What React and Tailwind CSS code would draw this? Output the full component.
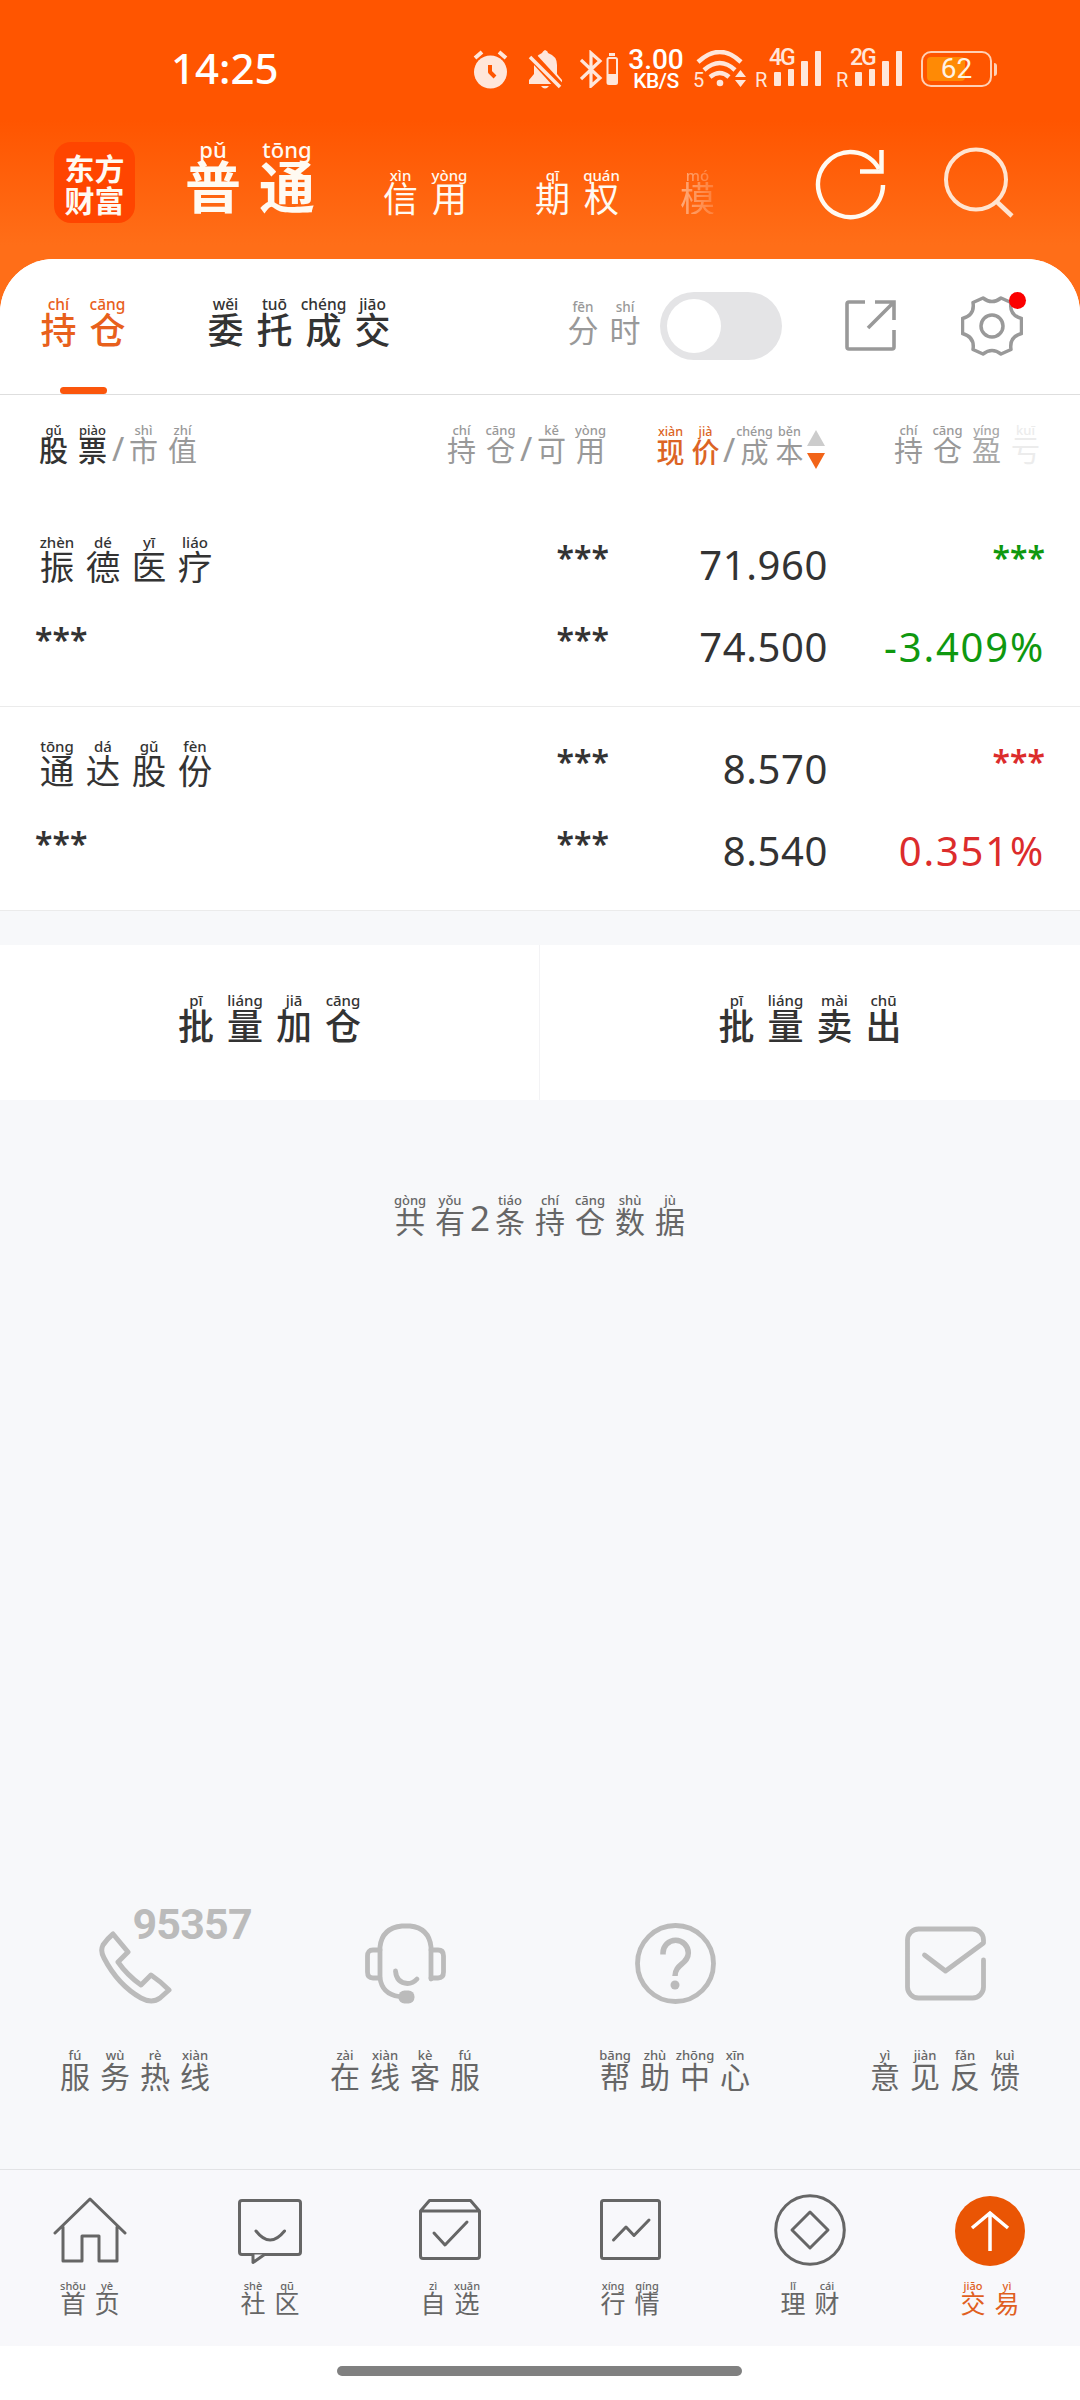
import React from "react";

const SIZES = {
  title: { cell: "w-[74px]", py: "text-[22px] leading-[13px]", hz: "text-[56px]" },
  nav: { cell: "w-[49px]", py: "text-[15px] leading-[10px]", hz: "-mt-[1px] text-[35px]" },
  tab: { cell: "w-[49px]", py: "text-[15.5px] leading-[12px]", hz: "text-[36px]" },
  toggle: { cell: "w-[42px]", py: "text-[13.5px] leading-[11px]", hz: "text-[31px]" },
  head: { cell: "w-[39px]", py: "text-[13px] leading-[10px]", hz: "text-[29px]" },
  price: { cell: "w-[35px]", py: "text-[12.5px] leading-[10px]", hz: "text-[28px]" },
  stock: { cell: "w-[46px]", py: "text-[15px] leading-[11px]", hz: "text-[34.5px]" },
  button: { cell: "w-[49px]", py: "text-[15px] leading-[11px]", hz: "text-[36px]" },
  note: { cell: "w-[40px]", py: "text-[13px] leading-[10px]", hz: "text-[30px]" },
  footer: { cell: "w-[34px]", py: "text-[11px] leading-[9px]", hz: "text-[25px]" },
};

// Texto chino con el pinyin encima de cada carácter
function Pinyin({ text, py, size, className = "" }) {
  const s = SIZES[size];
  const silabas = py.split(" ");
  return (
    <div className={`flex shrink-0 ${className}`}>
      {[...text].map((c, i) => (
        <div key={i} className={`flex flex-col items-center ${s.cell}`}>
          <span className={`whitespace-nowrap font-medium ${s.py}`}>{silabas[i]}</span>
          <span className={`font-['Noto_Sans_CJK_SC',sans-serif] leading-none ${s.hz}`}>{c}</span>
        </div>
      ))}
    </div>
  );
}

function Svg({ w, h, sw = 3, className = "", children }) {
  return (
    <svg
      width={w}
      height={h}
      viewBox={`0 0 ${w} ${h}`}
      fill="none"
      stroke="currentColor"
      strokeWidth={sw}
      strokeLinejoin="round"
      strokeLinecap="round"
      className={`shrink-0 ${className}`}
    >
      {children}
    </svg>
  );
}

function Senal({ tipo }) {
  return (
    <div className="flex h-[38px] w-[66px] text-[#ffe6da]">
      <span className="mt-[20px] w-[14px] font-['Roboto',sans-serif] text-[20px] leading-none">R</span>
      <div className="relative flex h-[36px] items-end gap-[7px] pl-[5px]">
        <span className="absolute left-0 -top-[4px] font-['Roboto',sans-serif] text-[23px] font-medium leading-none tracking-[-2px]">
          {tipo}
        </span>
        <div className="h-[14px] w-[6.5px] rounded-[1px] bg-current"></div>
        <div className="h-[17px] w-[6.5px] rounded-[1px] bg-current"></div>
        <div className="h-[25px] w-[6.5px] rounded-[1px] bg-current"></div>
        <div className="h-[35px] w-[6.5px] rounded-[1px] bg-current"></div>
      </div>
    </div>
  );
}

function BarraEstado() {
  return (
    <div className="flex h-[130px] items-start pl-[171px] text-white">
      <span className="mt-[47px] w-[302px] text-[42px] font-medium leading-none">14:25</span>
      <div className="flex items-start pt-[50px] text-[#ffe6da]">
        {/* Alarma */}
        <Svg w={35} h={39} sw={4}>
          <circle cx="17.5" cy="22" r="16.5" fill="currentColor" stroke="none" />
          <path d="M2 8 9 2M33 8 26 2" strokeLinecap="butt" />
          <path d="M17 15V22L22 27" stroke="#ff5500" strokeLinecap="butt" />
        </Svg>
        {/* Campana silenciada */}
        <Svg w={35} h={39} sw={3.5} className="ml-[20px]">
          <path
            d="M17 0Q20 1 20 3Q29 6 29 15V24L34 30V34H1V30L6 24V15Q6 6 14 3Q15 1 17 0ZM13 36H21Q17 41 13 36Z"
            fill="currentColor"
            stroke="none"
          />
          <path d="M1 3 33 38" stroke="#ff5500" strokeWidth="9" strokeLinecap="butt" />
          <path d="M2 7 32 37" strokeLinecap="butt" />
        </Svg>
        {/* Bluetooth */}
        <Svg w={38} h={38} sw={3.2} className="ml-[17px]">
          <path d="M1 10 20 28 11 36V3L20 11 1 29" strokeLinejoin="miter" strokeLinecap="butt" />
          <rect x="27.500" y="8" width="9.500" height="26" rx="1.500" strokeWidth="2" />
          <path d="M29 4.500H35" strokeWidth="3" strokeLinecap="butt" />
          <rect x="27" y="24" width="10" height="10" fill="currentColor" stroke="none" />
        </Svg>
        <div className="-mt-[2px] ml-[9px] flex w-[58px] flex-col items-center font-['Roboto',sans-serif] font-medium text-white">
          <span className="text-[28px] leading-[24px]">3.00</span>
          <span className="text-[21px] leading-[18px] tracking-[-0.5px]">KB/S</span>
        </div>
        {/* Wifi */}
        <Svg w={52} h={40} sw={4.5} className="ml-[9px]">
          <path d="M4 12Q26 -8 47 12M10 20Q26 6 41 20M16 27Q26 19 35 27" strokeLinecap="butt" />
          <circle cx="26" cy="33" r="3.300" fill="currentColor" stroke="none" />
          <path d="M41 27 46.500 20 52 27ZM41 30 46.500 37 52 30Z" fill="currentColor" stroke="none" />
          <text x="-1" y="37" className="font-['Roboto',sans-serif] text-[20px]" fill="currentColor" stroke="none">
            5
          </text>
        </Svg>
        <div className="ml-[9px] flex gap-[15px]">
          <Senal tipo="4G" />
          <Senal tipo="2G" />
        </div>
        {/* Batería */}
        <div className="ml-[19px] mt-[1px] flex items-center gap-[2px]">
          <div className="relative flex h-[36px] w-[71px] items-center justify-center rounded-[10px] border-[2.5px] border-[#ffd0b5]">
            <div className="absolute left-[4px] top-[4px] h-[24px] w-[38px] rounded-[4px] bg-[#ff8a05]"></div>
            <span className="relative font-['Roboto',sans-serif] text-[28px] leading-none text-[#fff3e4]">62</span>
          </div>
          <div className="h-[13px] w-[3px] rounded-r bg-[#ffd0b5]"></div>
        </div>
      </div>
    </div>
  );
}

function Cabecera() {
  return (
    <div className="flex h-[129px] items-start text-[#fffaf2]">
      {/* Logo */}
      <div className="ml-[54px] mt-[12px] flex h-[81px] w-[81px] flex-col items-center justify-center rounded-[17px] bg-[#ff4500] font-['Noto_Sans_CJK_SC',sans-serif] text-[30px] font-bold leading-[32px]">
        <span>东方</span>
        <span>财富</span>
      </div>
      <Pinyin text="普通" py="pǔ tōng" size="title" className="ml-[41px] mt-[13px] font-bold" />
      <Pinyin text="信用" py="xìn yòng" size="nav" className="ml-[52px] mt-[40px]" />
      <Pinyin text="期权" py="qī quán" size="nav" className="ml-[54px] mt-[40px]" />
      {/* Se desvanece hacia el borde derecho */}
      <div className="ml-[52px] mt-[36px] w-[37px] overflow-hidden pl-[2px] pt-[4px] text-[#ffae80] [mask-image:linear-gradient(to_right,black,rgba(0,0,0,0.35))]">
        <Pinyin text="模" py="mó" size="nav" />
      </div>
      <Svg w={71} h={72} sw={4.5} className="ml-[100px] mt-[18px]">
        <path d="M68 37A32.500 32.500 0 1 1 64 21" strokeLinecap="butt" />
        <path d="M66.500 2V23.500H45" strokeLinejoin="miter" strokeLinecap="butt" />
      </Svg>
      <Svg w={71} h={72} sw={4} className="ml-[58px] mt-[17px] text-[#ffe4d0]">
        <circle cx="32" cy="32.500" r="30" />
        <path d="M52 54 68 69" strokeLinecap="butt" strokeWidth="4.500" />
      </Svg>
    </div>
  );
}

function Pestanas() {
  return (
    <div className="flex h-[136px] items-start border-b border-[#dedede] bg-white pl-[34px] text-[#333]">
      <div className="flex flex-col items-center font-medium text-[#e8601c]">
        <Pinyin text="持仓" py="chí cāng" size="tab" className="mt-[39px]" />
        <div className="mt-[41px] h-[7px] w-[47px] rounded-full bg-[#fb560c]"></div>
      </div>
      <Pinyin text="委托成交" py="wěi tuō chéng jiāo" size="tab" className="ml-[69px] mt-[39px] font-medium" />
      <Pinyin text="分时" py="fēn shí" size="toggle" className="ml-[165px] mt-[43px] text-[#999]" />
      <div className="ml-[14px] mt-[33px] h-[68px] w-[122px] rounded-full bg-[#e4e4e6] p-[7px]">
        <div className="h-[54px] w-[54px] rounded-full bg-white"></div>
      </div>
      <Svg w={51} h={51} sw={3.6} className="ml-[63px] mt-[41px] text-[#999]">
        <path d="M20 2H4Q2 2 2 4V47Q2 49 4 49H47Q49 49 49 47V30" strokeLinecap="butt" />
        <path d="M30 2H49V20M49 2 23 28" strokeLinecap="butt" strokeLinejoin="miter" />
      </Svg>
      <div className="relative ml-[65px] mt-[36px]">
        <Svg w={62} h={62} sw={3.5} className="text-[#999]">
          <g transform="translate(31 31)">
            <path d="M-9-28Q0-21 9-28L19-23.500Q17-11 29.500-7.500V7.500Q17 11 19 23.500L9 28Q0 21-9 28L-19 23.500Q-17 11-29.500 7.500V-7.500Q-17-11-19-23.500Z" />
            <circle r="11" />
          </g>
        </Svg>
        <div className="absolute -top-[3px] right-[-3px] h-[17px] w-[17px] rounded-full bg-[#fb0000]"></div>
      </div>
    </div>
  );
}

function Barra() {
  return (
    <span className="w-[12px] text-center font-['Noto_Sans',sans-serif] text-[33px] leading-[31px]">/</span>
  );
}

function EncabezadoTabla() {
  return (
    <div className="flex h-[108px] items-start bg-white pl-[34px] pt-[30px] text-[#999]">
      <div className="flex items-end">
        <Pinyin text="股票" py="gǔ piào" size="head" className="font-medium text-[#333]" />
        <Barra />
        <Pinyin text="市值" py="shì zhí" size="head" />
      </div>
      <div className="ml-[240px] flex items-end">
        <Pinyin text="持仓" py="chí cāng" size="head" />
        <Barra />
        <Pinyin text="可用" py="kě yòng" size="head" />
      </div>
      <div className="ml-[43px] mt-[2px] flex items-end">
        <Pinyin text="现价" py="xiàn jià" size="price" className="font-medium text-[#dc6424]" />
        <Barra />
        <Pinyin text="成本" py="chéng běn" size="price" className="ml-[2px]" />
      </div>
      <Svg w={18} h={40} className="mt-[5px]">
        <path d="M0 16 9 0 18 16Z" fill="#ccc" stroke="none" />
        <path d="M0 23 9 39 18 23Z" fill="#f26418" stroke="none" />
      </Svg>
      <div className="ml-[64px] flex">
        <Pinyin text="持仓" py="chí cāng" size="head" />
        <Pinyin text="盈" py="yíng" size="head" className="text-[#a8a8a8]" />
        <Pinyin text="亏" py="kuī" size="head" className="text-[#ececec]" />
      </div>
    </div>
  );
}

const acciones = [
  { nombre: "振德医疗", py: "zhèn dé yī liáo", actual: "71.960", coste: "74.500", pct: "-3.409%", color: "text-[#0f980f]" },
  { nombre: "通达股份", py: "tōng dá gǔ fèn", actual: "8.570", coste: "8.540", pct: "0.351%", color: "text-[#dc2c2c]" },
];

function Oculto({ className = "" }) {
  return <span className={`text-[32px] font-semibold leading-none ${className}`}>***</span>;
}

function FilaAccion({ accion }) {
  return (
    <div className="grid h-[204px] grid-cols-[575px_219px_217px] grid-rows-[82px_82px] border-b border-[#ebebeb] bg-white pl-[34px] pt-[39px] text-[#333]">
      <div className="flex justify-between">
        <Pinyin text={accion.nombre} py={accion.py} size="stock" className="-mt-[5px]" />
        <Oculto />
      </div>
      <span className="pt-[3px] text-right text-[40px] leading-none tracking-[0.6px]">{accion.actual}</span>
      <Oculto className={`text-right ${accion.color}`} />
      <div className="flex justify-between">
        <Oculto className="pl-[1px]" />
        <Oculto />
      </div>
      <span className="pt-[3px] text-right text-[40px] leading-none tracking-[0.6px]">{accion.coste}</span>
      <span className={`pt-[3px] text-right text-[40px] leading-none tracking-[1.8px] ${accion.color}`}>
        {accion.pct}
      </span>
    </div>
  );
}

const servicios = [
  {
    nombre: "服务热线",
    py: "fú wù rè xiàn",
    icono: (
      <div className="relative">
        <Svg w={73} h={81} sw={5}>
          <path d="M14 11 29 29 19 39Q28 52 42 62L52 52Q61 58 70 67L61 75Q53 81 42 75Q19 62 5 35Q1 28 4 22Q8 16 14 11Z" />
        </Svg>
        <span className="absolute -top-[20px] left-[34px] font-['Roboto',sans-serif] text-[43px] font-bold leading-none tracking-[-0.8px]">
          95357
        </span>
      </div>
    ),
  },
  {
    nombre: "在线客服",
    py: "zài xiàn kè fú",
    icono: (
      <Svg w={81} h={81} sw={4.8}>
        <path d="M66 56V24Q64 5 45 3H37Q17 5 15 24V55Q17 71 34 73.500" />
        <path d="M15 27H8Q2.500 27 2.500 33V49Q2.500 55 8 55H15M66 27H73Q78.500 27 78.500 33V49Q78.500 55 73 55H66" />
        <path d="M30.500 48Q31.500 60 42.500 60.500Q48 60.500 52 56" />
        <rect x="33.500" y="67.500" width="16" height="13" rx="6" fill="currentColor" stroke="none" />
      </Svg>
    ),
  },
  {
    nombre: "帮助中心",
    py: "bāng zhù zhōng xīn",
    icono: (
      <Svg w={81} h={81} sw={4.8}>
        <circle cx="40.500" cy="40.500" r="38" />
        <path d="M28 31.500V30A12.600 12.600 0 0 1 53.300 30C53.300 41 40 41 40 53" strokeLinecap="butt" strokeWidth="5.500" />
        <circle cx="40" cy="62" r="4.500" fill="currentColor" stroke="none" />
      </Svg>
    ),
  },
  {
    nombre: "意见反馈",
    py: "yì jiàn fǎn kuì",
    icono: (
      <Svg w={81} h={81} sw={4.8}>
        <path d="M78.500 37V64A11 11 0 0 1 67.500 75H13.500A11 11 0 0 1 2.500 64V17A11 11 0 0 1 13.500 6H67.500A11 11 0 0 1 78.500 17V20L40.500 48 19.500 32" />
      </Svg>
    ),
  },
];

const menu = [
  {
    nombre: "首页",
    py: "shǒu yè",
    icono: (
      <Svg w={74} h={72}>
        <path d="M2 39 37 5 72 39M10 33V67H29V42H46V67H64V33" />
      </Svg>
    ),
  },
  {
    nombre: "社区",
    py: "shè qū",
    icono: (
      <Svg w={64} h={72}>
        <rect x="1.500" y="6.500" width="61" height="54" rx="2.500" />
        <path d="M26.500 60.500 15 68.500V60.500" fill="#f8f8fb" />
        <path d="M18 37Q32 55 46.500 37" />
      </Svg>
    ),
  },
  {
    nombre: "自选",
    py: "zì xuǎn",
    icono: (
      <Svg w={62} h={72}>
        <path d="M1.500 17 10.500 6.500H51.500L60.500 17V62Q60.500 64.500 58 64.500H4Q1.500 64.500 1.500 62ZM2 17H60M15 39 26 51 48 28" />
      </Svg>
    ),
  },
  {
    nombre: "行情",
    py: "xíng qíng",
    icono: (
      <Svg w={61} h={72}>
        <rect x="1.500" y="6.500" width="58" height="58" rx="2" />
        <path d="M13.500 46 26 33 34 41.500 49 26" />
      </Svg>
    ),
  },
  {
    nombre: "理财",
    py: "lǐ cái",
    icono: (
      <Svg w={72} h={72}>
        <circle cx="36" cy="36" r="34.300" />
        <path d="M36 18 54 36 36 54 18 36Z" />
      </Svg>
    ),
  },
  {
    nombre: "交易",
    py: "jiāo yì",
    activo: true,
    icono: (
      <Svg w={72} h={72} sw={3.5} className="text-white">
        <circle cx="36" cy="37" r="35" fill="#ea5504" stroke="none" />
        <path d="M36 18V57M18 34 36 19 54 34" strokeLinecap="butt" strokeLinejoin="miter" />
      </Svg>
    ),
  },
];

export default function App() {
  return (
    <div className="flex h-[2400px] w-[1080px] flex-col overflow-hidden bg-[#f7f8fa] font-['Noto_Sans','Noto_Sans_CJK_SC',sans-serif]">
      <div className="h-[313px] bg-[linear-gradient(#ff5500_0px,#ff5500_120px,#ff6e18_245px,#ff6e18_313px)]">
        <BarraEstado />
        <Cabecera />
        <div className="h-[54px] rounded-t-[54px] bg-white"></div>
      </div>
      <div className="-mt-[54px]">
        <div className="overflow-hidden rounded-t-[54px]">
          <Pestanas />
        </div>
        <EncabezadoTabla />
        {acciones.map((a) => (
          <FilaAccion key={a.nombre} accion={a} />
        ))}
      </div>

      {/* Botones de operaciones en lote */}
      <div className="mt-[34px] flex h-[155px] bg-white font-medium text-[#333]">
        <div className="flex w-[540px] justify-center border-r border-[#f3f3f5] pt-[50px]">
          <Pinyin text="批量加仓" py="pī liáng jiā cāng" size="button" />
        </div>
        <div className="flex w-[540px] justify-center pt-[50px]">
          <Pinyin text="批量卖出" py="pī liáng mài chū" size="button" />
        </div>
      </div>

      <div className="mt-[95px] flex items-end justify-center text-[#666]">
        <Pinyin text="共有" py="gòng yǒu" size="note" />
        <span className="w-[20px] text-center text-[35px] leading-[35px]">2</span>
        <Pinyin text="条持仓数据" py="tiáo chí cāng shù jù" size="note" />
      </div>

      <div className="mb-[79px] mt-auto grid grid-cols-4">
        {servicios.map((s) => (
          <div key={s.nombre} className="flex flex-col items-center text-[#bbb]">
            {s.icono}
            <Pinyin text={s.nombre} py={s.py} size="note" className="mt-[46px] text-[#666]" />
          </div>
        ))}
      </div>

      <nav className="grid h-[177px] grid-cols-6 border-t border-[#e2e3e5] bg-[#f8f8fb] pt-[24px]">
        {menu.map((m) => (
          <div
            key={m.nombre}
            className={`flex flex-col items-center ${m.activo ? "text-[#e0601f]" : "text-[#666]"}`}
          >
            {m.icono}
            <Pinyin text={m.nombre} py={m.py} size="footer" className="mt-[15px]" />
          </div>
        ))}
      </nav>
      <div className="flex h-[54px] justify-center bg-white pr-[1px] pt-[20px]">
        <div className="h-[10px] w-[405px] rounded-full bg-[#808080]"></div>
      </div>
    </div>
  );
}
